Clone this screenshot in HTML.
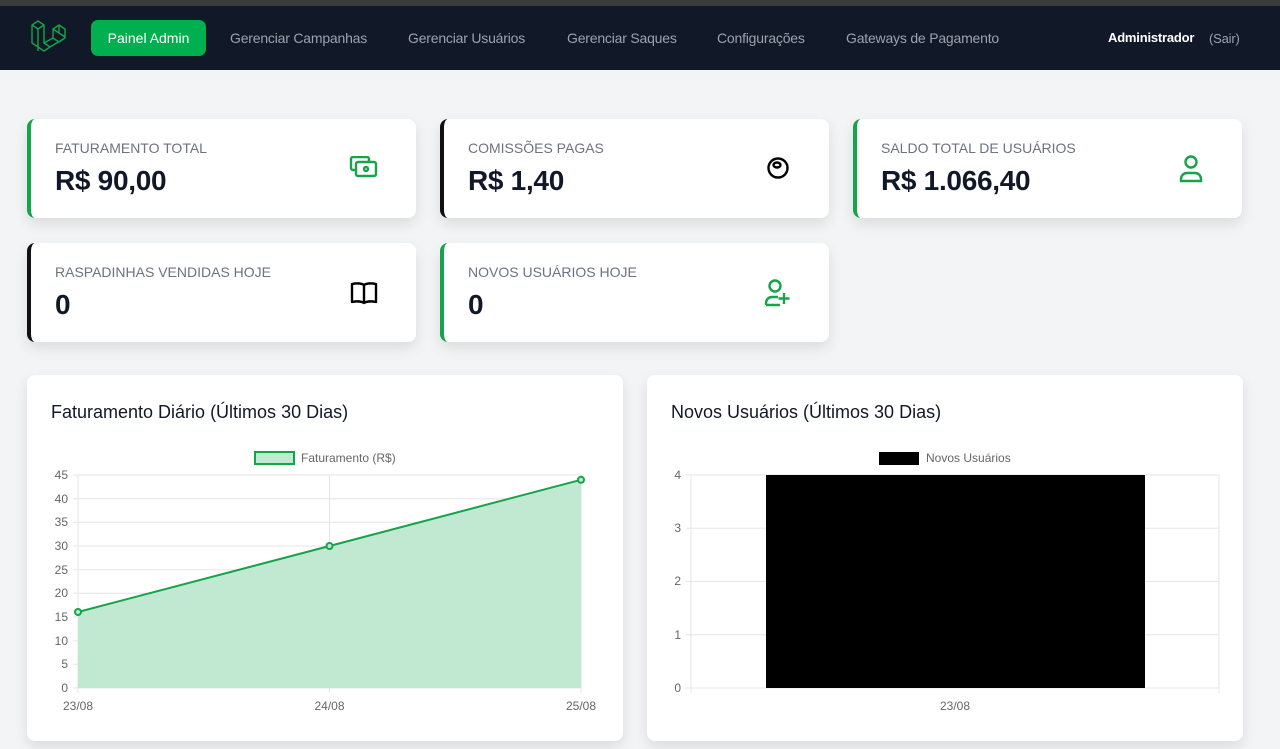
<!DOCTYPE html>
<html><head><meta charset="utf-8"><style>
*{box-sizing:border-box;margin:0;padding:0}
body{width:1280px;height:749px;overflow:hidden;background:#f3f4f6;font-family:"Liberation Sans",sans-serif;position:relative}
.top{position:absolute;left:0;top:0;width:1280px;height:6px;background:#3b3b3b}
.nav{position:absolute;left:0;top:6px;width:1280px;height:64px;background:#111827}
.nav a{position:absolute;top:24px;font-size:14px;color:#9ca3af;text-decoration:none;letter-spacing:-0.2px}
.btn{position:absolute;left:91px;top:14px;width:115px;height:36px;background:#00b050;border-radius:7px;color:#fff;font-size:14px;text-align:center;line-height:36px}
.card{position:absolute;background:#fff;border-radius:8px;box-shadow:0 6px 14px rgba(0,0,0,.1)}
.stat{height:99px;width:389px;border-left:4px solid #16a34a}
.stat.k{border-left-color:#111}
.lab{position:absolute;left:24px;top:21px;font-size:14px;color:#6b7280}
.val{position:absolute;left:24px;top:46px;font-size:28px;font-weight:bold;color:#111827;letter-spacing:-0.3px}
.ic{position:absolute;top:37px}
.ct{position:absolute;left:24px;top:27px;font-size:18px;color:#111827}
svg text{font-family:"Liberation Sans",sans-serif;font-size:12px;fill:#666}
</style></head><body>
<div class="top"></div>
<div class="nav">
<svg style="position:absolute;left:30px;top:13px" width="38" height="38" viewBox="0 0 38 38" fill="none" stroke="#16a34a" stroke-width="1.4" stroke-linejoin="round"><path d="M2 6l6-4 6 4v18l9-5V10l6-4 6 4v9l-15 9-6 4-6-4-6-4z M2 6l6 4 6-4 M8 10v22 M23 19l6 4 6-4 M29 6v8l6 4 M23 10l6 4 M14 24l6 4"/></svg>
<div class="btn">Painel Admin</div>
<a style="left:230px">Gerenciar Campanhas</a>
<a style="left:408px">Gerenciar Usuários</a>
<a style="left:567px">Gerenciar Saques</a>
<a style="left:717px">Configurações</a>
<a style="left:846px">Gateways de Pagamento</a>
<a style="left:1108px;color:#fff;font-weight:bold;font-size:13px">Administrador</a>
<a style="left:1209px;font-size:13px;top:25px">(Sair)</a>
</div>

<div class="card stat" style="left:27px;top:119px"><div class="lab">FATURAMENTO TOTAL</div><div class="val">R$ 90,00</div>
<svg class="ic" style="left:318px" width="30" height="26" viewBox="0 0 30 26" fill="none" stroke="#16a34a" stroke-width="2.4" stroke-linejoin="round"><rect x="2" y="1" width="18" height="13" rx="2"/><rect x="7" y="6" width="20" height="14" rx="2" fill="#fff"/><circle cx="17" cy="13" r="2"/></svg></div>
<div class="card stat k" style="left:440px;top:119px"><div class="lab">COMISSÕES PAGAS</div><div class="val">R$ 1,40</div>
<svg class="ic" style="left:322px" width="24" height="24" viewBox="0 0 24 24" fill="none" stroke="#000" stroke-width="2.4"><circle cx="12" cy="12" r="9.5"/><ellipse cx="11" cy="9" rx="3.5" ry="2.5"/></svg></div>
<div class="card stat" style="left:853px;top:119px"><div class="lab">SALDO TOTAL DE USUÁRIOS</div><div class="val">R$ 1.066,40</div>
<svg class="ic" style="left:321px;top:35px" width="26" height="30" viewBox="0 0 26 30" fill="none" stroke="#16a34a" stroke-width="2.4"><circle cx="13" cy="8" r="5.5"/><path d="M3 27v-2a6 6 0 0 1 6-6h8a6 6 0 0 1 6 6v2z"/></svg></div>
<div class="card stat k" style="left:27px;top:243px"><div class="lab">RASPADINHAS VENDIDAS HOJE</div><div class="val">0</div>
<svg class="ic" style="left:318px" width="30" height="26" viewBox="0 0 30 26" fill="none" stroke="#000" stroke-width="2.4" stroke-linejoin="round"><path d="M15 5c-3-2-7-2-12-1v18c5-1 9-1 12 1 3-2 7-2 12-1V4c-5-1-9-1-12 1zM15 5v18"/></svg></div>
<div class="card stat" style="left:440px;top:243px"><div class="lab">NOVOS USUÁRIOS HOJE</div><div class="val">0</div>
<svg class="ic" style="left:320px;top:35px" width="28" height="30" viewBox="0 0 28 30" fill="none" stroke="#16a34a" stroke-width="2.4"><circle cx="11" cy="8" r="5.5"/><path d="M2 27v-2a6 6 0 0 1 6-6h6 M2 27h14 M20 15v11 M14.5 20.5h11"/></svg></div>

<div class="card" style="left:27px;top:375px;width:596px;height:366px"><div class="ct">Faturamento Diário (Últimos 30 Dias)</div></div>
<div class="card" style="left:647px;top:375px;width:596px;height:366px"><div class="ct">Novos Usuários (Últimos 30 Dias)</div></div>

<svg style="position:absolute;left:0;top:0" width="1280" height="749">
<g stroke="#e5e5e5" stroke-width="1">
<line x1="73" x2="581" y1="475" y2="475"/><line x1="73" x2="581" y1="498.7" y2="498.7"/><line x1="73" x2="581" y1="522.3" y2="522.3"/><line x1="73" x2="581" y1="546" y2="546"/><line x1="73" x2="581" y1="569.7" y2="569.7"/><line x1="73" x2="581" y1="593.3" y2="593.3"/><line x1="73" x2="581" y1="617" y2="617"/><line x1="73" x2="581" y1="640.7" y2="640.7"/><line x1="73" x2="581" y1="664.3" y2="664.3"/><line x1="73" x2="581" y1="688" y2="688"/>
<line x1="78" x2="78" y1="475" y2="693"/><line x1="329.5" x2="329.5" y1="475" y2="693"/><line x1="581" x2="581" y1="475" y2="693"/>
</g>
<rect x="255" y="452" width="39" height="12" fill="#c1e9d1" stroke="#16a34a" stroke-width="2"/>
<text x="301" y="462">Faturamento (R$)</text>
<path d="M78 612L329.5 546L581 479.8V688H78z" fill="#c1e9d1"/>
<path d="M78 612L329.5 546L581 479.8" fill="none" stroke="#16a34a" stroke-width="2"/>
<g fill="#c1e9d1" stroke="#16a34a" stroke-width="2"><circle cx="78" cy="612" r="3"/><circle cx="329.5" cy="546" r="3"/><circle cx="581" cy="479.8" r="3"/></g>
<g text-anchor="end"><text x="68" y="479">45</text><text x="68" y="503">40</text><text x="68" y="526">35</text><text x="68" y="550">30</text><text x="68" y="574">25</text><text x="68" y="597">20</text><text x="68" y="621">15</text><text x="68" y="645">10</text><text x="68" y="668">5</text><text x="68" y="692">0</text></g>
<g text-anchor="middle"><text x="78" y="710">23/08</text><text x="329.5" y="710">24/08</text><text x="581" y="710">25/08</text></g>

<g stroke="#e5e5e5" stroke-width="1">
<line x1="686" x2="1219" y1="475" y2="475"/><line x1="686" x2="1219" y1="528.25" y2="528.25"/><line x1="686" x2="1219" y1="581.5" y2="581.5"/><line x1="686" x2="1219" y1="634.75" y2="634.75"/><line x1="686" x2="1219" y1="688" y2="688"/>
<line x1="691" x2="691" y1="475" y2="693"/><line x1="1219" x2="1219" y1="475" y2="693"/>
</g>
<rect x="879" y="452" width="40" height="13" fill="#000"/>
<text x="926" y="462">Novos Usuários</text>
<rect x="766" y="475" width="379" height="213" fill="#000"/>
<g text-anchor="end"><text x="681" y="479">4</text><text x="681" y="532">3</text><text x="681" y="585">2</text><text x="681" y="639">1</text><text x="681" y="692">0</text></g>
<text x="955" y="710" text-anchor="middle">23/08</text>
</svg>
</body></html>
